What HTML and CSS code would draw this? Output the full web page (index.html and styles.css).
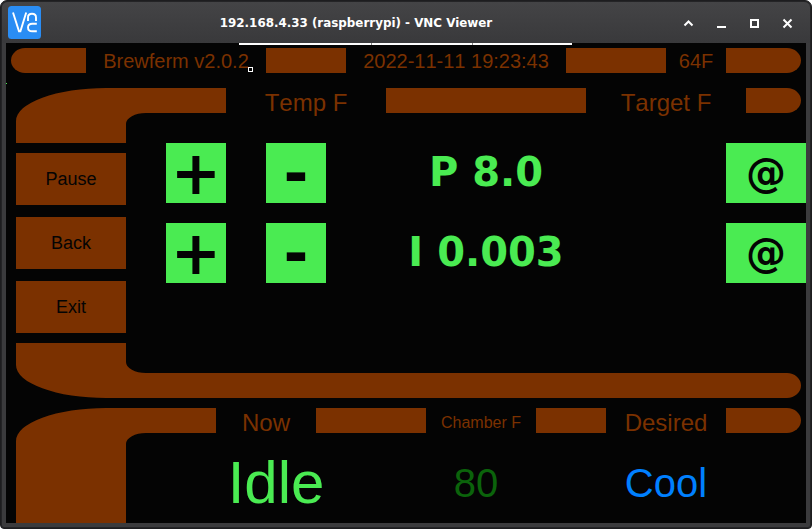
FILE: index.html
```html
<!DOCTYPE html>
<html lang="en">
<head>
<meta charset="utf-8">
<title>192.168.4.33 (raspberrypi) - VNC Viewer</title>
<link rel="stylesheet" href="styles.css">
</head>
<body>
<div class="window">
  <header class="titlebar">
    <svg class="logo" viewBox="0 0 33 33" width="33" height="33">
      <rect width="33" height="33" rx="3.5" fill="#2a8df4"/>
      <g fill="none" stroke="#fff" stroke-width="1.9">
        <path d="M5 6.5L11 25.3H12.4L18.2 6.5"/>
        <path d="M20 15V11.5Q20 7.8 24 7.8Q28 7.8 28 11.5V15"/>
        <path d="M28.8 17.7H24.3Q20 17.7 20 21.5Q20 25.3 24.3 25.3H28.8"/>
      </g>
    </svg>
    <h1 class="title">192.168.4.33 (raspberrypi) - VNC Viewer</h1>
    <div class="controls">
      <svg width="11" height="11" viewBox="0 0 11 11"><path d="M1.5 7.5L5.5 3.5L9.5 7.5" fill="none" stroke="#fff" stroke-width="2"/></svg>
      <svg width="11" height="11" viewBox="0 0 11 11"><path d="M1 9H10" fill="none" stroke="#fff" stroke-width="2"/></svg>
      <svg width="11" height="11" viewBox="0 0 11 11"><path d="M2 2H9V9H2Z" fill="none" stroke="#fff" stroke-width="2"/></svg>
      <svg width="11" height="11" viewBox="0 0 11 11"><path d="M1.5 1.5L9.5 9.5M9.5 1.5L1.5 9.5" fill="none" stroke="#fff" stroke-width="2"/></svg>
    </div>
  </header>

  <main class="screen">
    <div class="menu-edge"><i></i><i></i><i></i></div>
    <div class="cursor"></div>
    <div class="speck"></div>

    <div class="row status">
      <span class="bar cap-left"></span>
      <span class="label">Brewferm v2.0.2</span>
      <span class="bar"></span>
      <span class="label">2022-11-11 19:23:43</span>
      <span class="bar"></span>
      <span class="label">64F</span>
      <span class="bar cap-right"></span>
    </div>

    <section class="panel">
      <svg class="elbow" width="210" height="55" viewBox="0 0 210 55"><path d="M0 55V33A90 33 0 0 1 90 0H210V25H130A20 11 0 0 0 110 36V55Z"/></svg>
      <div class="row temps">
        <span class="label large">Temp F</span>
        <span class="bar"></span>
        <span class="label large">Target F</span>
        <span class="bar cap-right"></span>
      </div>
      <nav class="side">
        <button>Pause</button>
        <button>Back</button>
        <button>Exit</button>
      </nav>
      <div class="settings">
        <button class="step">+</button>
        <button class="step">-</button>
        <output>P 8.0</output>
        <button class="at">@</button>
        <button class="step">+</button>
        <button class="step">-</button>
        <output>I 0.003</output>
        <button class="at">@</button>
      </div>
      <svg class="elbow lower" width="785" height="55" viewBox="0 0 785 55"><path d="M0 0V22A90 33 0 0 0 90 55H771A14 12.5 0 0 0 771 30H130A20 11 0 0 1 110 19V0Z"/></svg>
    </section>

    <section class="summary">
      <svg class="elbow" width="200" height="115" viewBox="0 0 200 115"><path d="M0 115V33A90 33 0 0 1 90 0H200V25H130A20 11 0 0 0 110 36V115Z"/></svg>
      <div class="row heads">
        <span class="label large">Now</span>
        <span class="bar"></span>
        <span class="label small">Chamber F</span>
        <span class="bar"></span>
        <span class="label large">Desired</span>
        <span class="bar cap-right"></span>
      </div>
      <div class="readings">
        <span class="idle">Idle</span>
        <span class="chamber">80</span>
        <span class="cool">Cool</span>
      </div>
    </section>
  </main>
</div>
</body>
</html>
```
FILE: styles.css
```css
* { box-sizing: border-box; }
html { background: #fff; }
body { margin: 0; width: 812px; height: 529px; overflow: hidden; font-family: "Liberation Sans", Arial, sans-serif; font-kerning: none; }
.window {
  width: 812px; height: 529px; padding: 0 5px 5px;
  border: 1px solid #1d1d1f; border-radius: 7px 7px 4px 4px;
  background: #3b3b3d; box-shadow: inset 0 0 0 1px #242426;
}
.titlebar {
  display: grid; grid-template-columns: 35px 1fr 110px; align-items: center;
  height: 42px; margin: 0 -4px; padding: 1px 17px 0 6px;
  background: linear-gradient(#444446, #39393b);
  border-top: 1px solid #242426; border-radius: 6px 6px 0 0;
}
.logo { display: block; margin-top: -1px; }
.title {
  margin: 0 14px 0 0; text-align: center; color: #fff;
  font: bold 11.9px/16px "DejaVu Sans", sans-serif; white-space: nowrap;
}
.controls { display: flex; gap: 22px; }
.controls svg { flex: none; }

.screen { position: relative; width: 800px; height: 480px; padding-top: 5px; background: #040404; overflow: hidden; }
.menu-edge { position: absolute; top: 0; left: 233px; display: flex; gap: 1px; width: 333px; height: 2px; background: #888; }
.menu-edge i { background: #fff; width: 132px; }
.menu-edge i:nth-child(2) { width: 100px; }
.menu-edge i:nth-child(3) { width: 99px; }
.cursor { position: absolute; left: 242px; top: 24px; width: 5px; height: 5px; border: 1px solid #fff; background: #040404; }
.speck { position: absolute; left: 0; top: 40px; width: 1px; height: 1px; background: #4aeb52; }

.row { display: grid; grid-template-rows: 25px; height: 25px; color: #7b3100; }
.status { grid-template-columns: 75px 180px 80px 220px 100px 60px 75px; margin-left: 5px; }
.bar { background: #7b3100; }
.cap-left { border-radius: 14px 0 0 14px / 12.5px 0 0 12.5px; }
.cap-right { border-radius: 0 14px 14px 0 / 0 12.5px 12.5px 0; }
.label { text-align: center; font-size: 20px; line-height: 26px; white-space: nowrap; }
.large { font-size: 24px; line-height: 30px; }
.small { font-size: 16px; line-height: 29px; }
.elbow { display: block; fill: #7b3100; }

.panel {
  display: grid; grid-template-columns: 110px 100px 580px; grid-template-rows: 55px 200px 55px;
  margin: 15px 0 0 10px;
}
.panel > .elbow { grid-column: 1 / 3; }
.panel > .lower { grid-column: 1 / 4; }
.temps { grid-template-columns: 160px 200px 160px 55px; }
.side { display: grid; grid-auto-rows: 52px; gap: 12px; padding-top: 10px; }
button { border: 0; padding: 0; color: #040404; font-family: inherit; font-kerning: none; }
.side button { background: #7b3100; font-size: 18px; line-height: 52px; }
.settings {
  grid-column: 2 / 4; display: grid; grid-template-columns: 60px 60px 320px 80px; grid-template-rows: 60px 60px;
  column-gap: 40px; row-gap: 20px; padding-left: 40px;
  font-family: "DejaVu Sans", sans-serif; font-weight: bold;
}
.settings button { background: #4aeb52; font-weight: bold; height: 60px; }
.settings .step { font-size: 60px; line-height: 60px; }
.settings .at { font-size: 40px; line-height: 60px; }
output { padding-right: 80px; color: #4aeb52; font-size: 40px; line-height: 58px; text-align: center; }

.summary { display: grid; grid-template-columns: 110px 90px 590px; grid-template-rows: 25px 90px; margin: 10px 0 0 10px; }
.summary > .elbow { grid-area: 1 / 1 / 3 / 3; }
.heads { grid-area: 1 / 3; grid-template-columns: 100px 110px 110px 70px 120px 75px; }
.readings { grid-area: 2 / 2 / 3 / 4; display: grid; grid-template-columns: 300px 100px 280px; line-height: 100px; text-align: center; }
.idle { color: #4aeb52; font-size: 60px; }
.chamber { color: #0b630b; font-size: 40px; }
.cool { color: #0080ff; font-size: 40px; }
```
